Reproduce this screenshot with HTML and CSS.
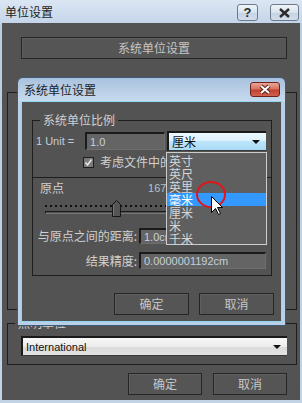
FILE: index.html
```html
<!DOCTYPE html>
<html>
  <head>
    <meta charset="UTF-8">
    <title>单位设置</title>
    <link rel="stylesheet" href="styles.css">
  </head>
  <body>
    <div class="win">
      <!-- 外层窗口标题栏 -->
      <div class="win-title">
        <div class="caption">单位设置</div>
        <div class="cap-btn help">?</div>
        <div class="cap-btn shut">
          <svg width="13" height="10" viewBox="0 0 13 10"><path d="M2 1 L11 9 M11 1 L2 9" stroke="#2b2b2b" stroke-width="2.4" fill="none"/></svg>
        </div>
      </div>
      <div class="win-body">
        <div class="btn btn-wide">系统单位设置</div>
        <div class="group group-scale"></div>
        <div class="group group-light">
          <span class="group-label">照明单位</span>
          <div class="combo combo-white"><span>International</span><i class="arrow"></i></div>
        </div>
        <div class="footer">
          <div class="btn">确定</div>
          <div class="btn">取消</div>
        </div>
      </div>

      <!-- 浮在上面的子对话框 -->
      <div class="dlg">
        <div class="dlg-title">
          <div class="caption">系统单位设置</div>
          <div class="dlg-close">
            <svg width="14" height="11" viewBox="0 0 14 11"><path d="M3 2 L11 9 M11 2 L3 9" stroke="#5a2018" stroke-width="4" fill="none"/><path d="M3 2 L11 9 M11 2 L3 9" stroke="#fff" stroke-width="2" fill="none"/></svg>
          </div>
        </div>
        <div class="dlg-body">
          <div class="group group-sys">
            <span class="group-label">系统单位比例</span>
            <div class="row row-unit">
              <span class="unit-label">1 Unit =</span>
              <div class="field field-unit">1.0</div>
              <div class="combo combo-blue"><span>厘米</span><i class="arrow"></i></div>
            </div>
            <div class="row row-check">
              <span class="check">
                <svg width="11" height="11" viewBox="0 0 11 11"><rect x="0.5" y="0.5" width="10" height="10" fill="#7a7a7a" stroke="#1e1e1e"/><path d="M2.5 5.5 L4.5 8 L8.5 2.5" stroke="#e6e6e6" stroke-width="1.6" fill="none"/></svg>
              </span>
              <span class="check-text">考虑文件中的系统单位</span>
            </div>
            <div class="origin">
              <div class="row row-origin"><span>原点</span><span class="origin-val">16777215.0cm</span></div>
              <div class="slider">
                <div class="dots"></div>
                <div class="track"></div>
                <svg class="thumb" width="9" height="17" viewBox="0 0 9 17"><path d="M0.5 4.5 L4.5 0.5 L8.5 4.5 L8.5 16.5 L0.5 16.5 Z" fill="#555" stroke="#161616"/><path d="M1.5 5 L1.5 15.5" stroke="#7a7a7a"/></svg>
              </div>
              <div class="row row-field"><span class="field-label">与原点之间的距离:</span><div class="field field-dist">1.0cm</div></div>
              <div class="row row-field row-last"><span class="field-label">结果精度:</span><div class="field">0.0000001192cm</div></div>
            </div>
          </div>
          <div class="footer dlg-footer">
            <div class="btn">确定</div>
            <div class="btn">取消</div>
          </div>
        </div>
      </div>

      <!-- 下拉列表弹出层 -->
      <ul class="droplist">
        <li>英寸</li>
        <li>英尺</li>
        <li>英里</li>
        <li class="sel">毫米</li>
        <li>厘米</li>
        <li>米</li>
        <li>千米</li>
      </ul>
      <div class="ring"></div>
      <svg class="cursor" width="13" height="20" viewBox="0 0 13 20"><path d="M0.5 0.5 L0.5 16.5 L4.5 12.5 L7.5 18.5 L9.5 17.5 L6.5 11.5 L11.5 11.5 Z" fill="#fff" stroke="#000"/></svg>
    </div>
  </body>
</html>
```

FILE: styles.css
```css
/* 基本重置 */
html,body{margin:0;padding:0;background:#535353;}
body{font-family:"Noto Sans CJK SC","Liberation Sans",sans-serif;font-size:12px;line-height:14px;color:#d0d0d0;}

/* 外层窗口 */
.win{position:relative;width:302px;height:403px;box-sizing:border-box;padding:0 2px 3px 2px;background:linear-gradient(#dbe6f3,#c5d5e9 23px,#bccde2 24px,#c3d3e6);display:flex;flex-direction:column;overflow:hidden;}
.win-title{height:23px;flex:none;display:flex;align-items:flex-start;}
.caption{flex:1;line-height:23px;padding-left:3px;color:#1e1e1e;white-space:nowrap;}
.cap-btn{margin-top:4px;height:17px;box-sizing:border-box;border:1px solid #6d7a8a;border-radius:3px;background:linear-gradient(#f0f4f9,#d9e3ee 50%,#c4d2e2 51%,#d2deec);display:flex;align-items:center;justify-content:center;}
.help{width:21px;margin-right:12px;font:bold 13px "Liberation Sans",sans-serif;color:#2b2b2b;}
.shut{width:29px;margin-right:1px;}
.win-body{flex:1;background:#535353;display:flex;flex-direction:column;}

/* 按钮和分组框 */
.btn{height:22px;box-sizing:border-box;border:1px solid #262626;box-shadow:inset 1px 1px #5f5f5f;background:#555;color:#c6c6c6;display:flex;align-items:center;justify-content:center;}
.btn-wide{margin:14px 0 0 19px;width:266px;}
.group{box-sizing:border-box;border:1px solid #1e1e1e;position:relative;}
.group-scale{margin:33px 0 0 5px;width:290px;height:218px;}
.group-light{margin:13px 0 0 5px;width:290px;height:42px;padding:12px 0 0 13px;}
.group-label{position:absolute;top:-8px;left:7px;padding:0 3px;background:#535353;line-height:14px;white-space:nowrap;}
.footer{display:flex;justify-content:flex-end;gap:11px;margin-top:8px;padding-right:13px;}
.footer .btn{width:74px;}

/* 下拉框 */
.combo{height:20px;box-sizing:border-box;display:flex;align-items:center;padding:0 6px 0 3px;border-top:2px solid #1a1a1a;border-left:2px solid #1a1a1a;border-bottom:1px solid #3a3a3a;color:#111;}
.combo span{flex:1;}
.arrow{width:0;height:0;border-left:4px solid transparent;border-right:4px solid transparent;border-top:4px solid #111;}
.combo-white{width:266px;background:linear-gradient(#f8f8f8,#ececec 50%,#dadada 51%,#e2e2e2);font:11px "Liberation Sans",sans-serif;}
.combo-blue{width:99px;margin-left:2px;background:linear-gradient(#eef8fe,#dcf1fd 45%,#bde5fb 50%,#a9daf5);}

/* 子对话框 */
.dlg{position:absolute;left:17px;top:77px;width:269px;height:249px;box-sizing:border-box;border:1px solid #3e5a78;border-radius:6px 6px 0 0;padding:0 3px 3px;background:linear-gradient(#a9c2de,#c7daee 23px,#b9d0e9 24px);display:flex;flex-direction:column;}
.dlg-title{height:23px;flex:none;display:flex;align-items:flex-start;}
.dlg-close{margin:4px 2px 0 0;width:30px;height:15px;box-sizing:border-box;border:1px solid #6b2319;border-radius:3px;background:linear-gradient(#e9a597,#d5705f 48%,#c0402d 52%,#d0634f);display:flex;align-items:center;justify-content:center;}
.dlg-body{flex:1;background:#535353;border:1px solid #93d6f0;display:flex;flex-direction:column;}
.group-sys{margin:18px 0 0 10px;width:240px;height:156px;}
.row{display:flex;align-items:center;white-space:nowrap;}
.row-unit{margin-top:10px;height:20px;}
.unit-label{width:52px;padding-left:3px;box-sizing:border-box;font:11px "Liberation Sans",sans-serif;color:#c3ccd6;}
.field{box-sizing:border-box;height:16px;border-top:2px solid #1b1b1b;border-left:2px solid #1b1b1b;border-bottom:1px solid #6e6e6e;border-right:1px solid #6e6e6e;background:#646464;color:#c6d0da;font:11px "Liberation Sans",sans-serif;padding-left:3px;display:flex;align-items:center;overflow:hidden;}
.field-unit{width:80px;height:18px;}
.row-check{margin-top:5px;height:12px;padding-left:50px;gap:6px;}
.check{display:flex;}
.check-text{width:66px;overflow:hidden;}
.origin{margin:9px -1px 0;border-top:1px solid #1e1e1e;}
.row-origin{margin-top:3px;height:14px;padding-left:8px;}
.origin-val{margin-left:84px;width:18px;overflow:hidden;font:11px "Liberation Sans",sans-serif;color:#b4c1ce;}
.slider{position:relative;margin:5px 0 0 13px;height:16px;padding-top:5px;box-sizing:border-box;width:220px;}
.dots{height:2px;background:linear-gradient(90deg,#101010 0 2px,transparent 2px) 0 0/5px 2px repeat-x;}
.track{margin-top:4px;height:1px;border-top:1px solid #1a1a1a;border-bottom:1px solid #777;border-left:1px solid #1a1a1a;}
.thumb{position:absolute;left:67px;top:0;}
.row-field{margin-top:12px;height:16px;}
.row-last{margin-top:8px;height:17px;}
.row-last .field{height:17px;}
.field-label{width:105px;text-align:right;margin-right:2px;}
.row-field .field{width:127px;}
.row-field .field-dist{width:28px;border-right:0;}
.dlg-footer{margin-top:17px;gap:10px;padding-right:7px;}
.dlg-footer .btn{width:75px;}

/* 弹出列表和鼠标 */
.droplist{position:absolute;left:166px;top:152px;width:101px;height:93px;box-sizing:border-box;margin:0;padding:1px 0 0;list-style:none;border:1px solid #cdcdcd;background:#5f5f5f;}
.droplist li{height:13px;line-height:13px;padding-left:2px;color:#d6d6d6;}
.droplist .sel{background:#3399ff;color:#fff;}
.ring{position:absolute;left:196px;top:181px;width:30px;height:27px;box-sizing:border-box;border:2px solid #e3141b;border-radius:50%;}
.cursor{position:absolute;left:211px;top:196px;}
```
